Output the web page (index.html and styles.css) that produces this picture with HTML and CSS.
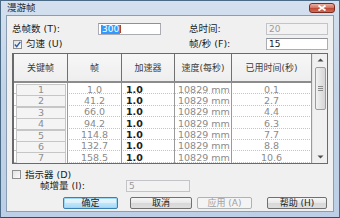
FILE: index.html
```html
<!DOCTYPE html>
<html>
<head>
<meta charset="utf-8">
<link rel="stylesheet" href="styles.css">
</head>
<body>
<div class="window">
  <div class="titlebar">
    <span class="title">漫游帧</span>
    <span class="close"><svg width="10" height="6" viewBox="0 0 10 6"><path d="M1.5 0.5 L8.5 5.5 M8.5 0.5 L1.5 5.5" stroke="#fff" stroke-width="1.8"/></svg></span>
  </div>
  <div class="client">
    <div class="form">
      <span class="lbl">总帧数 (T):</span>
      <div class="input"><span class="sel">300</span><span class="caret"></span></div>
      <span></span>
      <span class="lbl">总时间:</span>
      <div class="input disabled">20</div>
      <span class="chk-row span3"><span class="check"><svg width="7" height="7" viewBox="0 0 7 7"><path d="M0.8 3.6 L2.7 5.6 L6.3 0.8" stroke="#2a5caa" stroke-width="1.4" fill="none"/></svg></span>匀速 (U)</span>
      <span class="lbl">帧/秒 (F):</span>
      <div class="input">15</div>
    </div>

    <div class="table">
      <div class="cols">
        <div class="thead">
          <div>关键帧</div><div>帧</div><div>加速器</div><div>速度(每秒)</div><div>已用时间(秒)</div>
        </div>
        <div class="tbody">
          <div class="tr"><div class="c1"><span>1</span></div><div class="c2">1.0</div><div class="c3">1.0</div><div class="c4">10829 mm</div><div class="c5">0.1</div></div>
          <div class="tr"><div class="c1"><span>2</span></div><div class="c2">41.2</div><div class="c3">1.0</div><div class="c4">10829 mm</div><div class="c5">2.7</div></div>
          <div class="tr"><div class="c1"><span>3</span></div><div class="c2">66.0</div><div class="c3">1.0</div><div class="c4">10829 mm</div><div class="c5">4.4</div></div>
          <div class="tr"><div class="c1"><span>4</span></div><div class="c2">94.2</div><div class="c3">1.0</div><div class="c4">10829 mm</div><div class="c5">6.3</div></div>
          <div class="tr"><div class="c1"><span>5</span></div><div class="c2">114.8</div><div class="c3">1.0</div><div class="c4">10829 mm</div><div class="c5">7.7</div></div>
          <div class="tr"><div class="c1"><span>6</span></div><div class="c2">132.7</div><div class="c3">1.0</div><div class="c4">10829 mm</div><div class="c5">8.8</div></div>
          <div class="tr"><div class="c1"><span>7</span></div><div class="c2">158.5</div><div class="c3">1.0</div><div class="c4">10829 mm</div><div class="c5">10.6</div></div>
          <div class="tr"><div class="c1"><span></span></div><div class="c2"></div><div class="c3"></div><div class="c4"></div><div class="c5"></div></div>
        </div>
      </div>
      <div class="vscroll">
        <div class="arrow"><svg width="7" height="4" viewBox="0 0 7 4"><path d="M0.5 3.5 L3.5 0.5 L6.5 3.5 Z" fill="#4d4d4d"/></svg></div>
        <div class="thumb"><span class="grip"></span></div>
        <div class="track"></div>
        <div class="arrow"><svg width="7" height="4" viewBox="0 0 7 4"><path d="M0.5 0.5 L3.5 3.5 L6.5 0.5 Z" fill="#4d4d4d"/></svg></div>
      </div>
    </div>

    <div class="chk-row ind"><span class="check"></span>指示器 (D)</div>
    <div class="inc-row">
      <span class="lbl inc-lbl">帧增量 (I):</span>
      <div class="input disabled inc-input">5</div>
    </div>

    <div class="buttons">
      <span class="btn default b-ok">确定</span>
      <span class="btn b-cancel">取消</span>
      <span class="btn disabled b-apply">应用 (A)</span>
      <span class="btn b-help">帮助 (H)</span>
    </div>
  </div>
</div>
</body>
</html>
```

FILE: styles.css
```css
* { box-sizing: border-box; }
html, body { margin: 0; padding: 0; }
body {
  width: 340px;
  height: 218px;
  overflow: hidden;
  font-family: "DejaVu Sans", "Noto Sans CJK SC", sans-serif;
  font-size: 9.5px;
  color: #1a1a1a;
}
.window {
  width: 340px;
  height: 218px;
  border: 1px solid #4b6a86;
  border-bottom-color: #2f4f5f;
  background: linear-gradient(#d4e0ee, #c3d4e8 40%, #bccfe6);
  display: flex;
  flex-direction: column;
}
.titlebar {
  height: 14px;
  display: flex;
  justify-content: space-between;
  align-items: flex-start;
  padding: 0 4px 0 6px;
}
.title {
  margin-top: 1px;
  font-size: 9.5px;
  line-height: 12px;
  color: #1e2a3a;
}
.close {
  margin-top: 2px;
  width: 26px;
  height: 10px;
  border: 1px solid #7a2b22;
  border-radius: 3px;
  background: linear-gradient(#eab0a2, #d27865 45%, #c04a35 55%, #cf6d55);
  display: flex;
  align-items: center;
  justify-content: center;
}
.close svg { display: block; }
.client {
  flex: 1;
  margin: 0 5px 5px 5px;
  background: #f0f0f0;
  border: 1px solid #8a9db2;
  padding: 7px 5px 0 5px;
  display: flex;
  flex-direction: column;
}
.form {
  display: grid;
  grid-template-columns: 86px 63px 28px 77px 62px;
  grid-auto-rows: 12px;
  row-gap: 3px;
  align-items: center;
}
.span3 { grid-column: span 3; }
.lbl { white-space: nowrap; line-height: 12px; }
.input {
  height: 12px;
  border: 1px solid #abadb3;
  border-top-color: #8e9198;
  background: #fff;
  padding: 0 2px;
  font-size: 9px;
  line-height: 10px;
  display: flex;
  align-items: center;
  white-space: nowrap;
}
.input.disabled {
  background: #f2f2f2;
  border-color: #c2c4c8;
  color: #9a9a9a;
}
.sel {
  background: #3399ff;
  color: #fff;
  padding: 0 1px;
  line-height: 9px;
}
.caret {
  width: 1px;
  height: 8px;
  background: #b04020;
}
.chk-row {
  display: flex;
  align-items: center;
  gap: 4px;
  padding-left: 1px;
  white-space: nowrap;
  line-height: 10px;
}
.check {
  width: 9px;
  height: 9px;
  border: 1px solid #8e8f8f;
  background: linear-gradient(135deg, #e2e2e2, #fafafa);
  display: flex;
  align-items: center;
  justify-content: center;
}
.check svg { display: block; }

.table {
  margin-top: 3px;
  height: 111px;
  border: 1px solid #6a6a6a;
  border-left-width: 2px;
  display: flex;
  background: #fff;
}
.cols {
  width: 298px;
  flex: none;
  overflow: hidden;
  display: flex;
  flex-direction: column;
}
.thead, .tr {
  display: grid;
  grid-template-columns: 54px 54px 53px 57px 80px;
}
.thead {
  height: 29px;
  flex: none;
  background: linear-gradient(#f7f7f7, #eeeeee);
  border-bottom: 2px solid #8c8c8c;
}
.thead > div {
  border-right: 1px solid #707070;
  display: flex;
  align-items: center;
  justify-content: center;
  font-size: 9px;
  color: #3c3c3c;
  white-space: nowrap;
}
.thead > div:last-child { border-right: 1px solid #8a8a8a; }
.tbody { flex: 1; overflow: hidden; }
.tr {
  height: 11.4px;
  border-bottom: 1px dotted #c4c4c4;
  font-size: 9.5px;
  line-height: 10px;
  color: #8a8a8a;
}
.tr > div {
  border-right: 1px solid #c0c0c0;
  display: flex;
  align-items: center;
  white-space: nowrap;
}
.tr .c1 { padding: 1px 1px 0 2px; border-right-color: #9a9a9a; }
.tr .c1 span {
  flex: 1;
  height: 100%;
  border: 1px solid #c6c6c6;
  background: #f4f4f4;
  display: flex;
  align-items: center;
  justify-content: center;
  color: #8d8d8d;
}
.tr .c2 { justify-content: center; border-right-color: #9a9a9a; }
.tr .c3 { padding-left: 4px; color: #202020; font-weight: bold; border-right-color: #9a9a9a; }
.tr .c4 { padding-left: 3px; border-right-color: #9a9a9a; }
.tr .c5 { justify-content: center; border-right-color: #9a9a9a; }

.vscroll {
  flex: 1;
  background: #f0f0f0;
  border-left: 1px solid #e4e4e4;
  display: flex;
  flex-direction: column;
  align-items: center;
  padding: 2px 1px;
}
.arrow {
  height: 8px;
  width: 100%;
  display: flex;
  align-items: center;
  justify-content: center;
}
.arrow svg { display: block; }
.thumb {
  margin-top: 3px;
  height: 43px;
  width: 11px;
  border: 1px solid #9c9c9c;
  border-radius: 2px;
  background: linear-gradient(90deg, #f2f2f2, #e3e3e3 50%, #d6d6d6);
  display: flex;
  align-items: center;
  justify-content: center;
}
.grip {
  width: 5px;
  height: 5px;
  background: repeating-linear-gradient(#8a8a8a 0 1px, transparent 1px 2px);
}
.track { flex: 1; }

.ind { margin-top: 6px; height: 9px; padding-left: 0; }
.inc-row {
  margin-top: 1px;
  height: 12px;
  display: flex;
  align-items: center;
  padding-left: 28px;
}
.inc-lbl { width: 86px; }
.inc-input { width: 64px; }

.buttons {
  margin-top: 5px;
  display: flex;
  height: 12px;
}
.btn {
  height: 12px;
  border: 1px solid #707070;
  border-radius: 2px;
  background: linear-gradient(#f6f6f6, #e8e8e8 50%, #d8d8d8 51%, #dedede);
  display: flex;
  align-items: center;
  justify-content: center;
  font-size: 9px;
  line-height: 10px;
  color: #1a1a1a;
  white-space: nowrap;
}
.btn.default {
  border-color: #3c7fb1;
  background: linear-gradient(#eaf6fd, #d9f0fc 50%, #bee6fd 51%, #a7d9f5);
  box-shadow: inset 0 0 0 1px #9ed7f5;
}
.btn.disabled {
  border-color: #adb2b5;
  background: #f4f4f4;
  color: #a0a0a0;
}
.b-ok { margin-left: 51px; width: 55px; }
.b-cancel { margin-left: 12px; width: 62px; }
.b-apply { margin-left: 5px; width: 55px; }
.b-help { margin-left: 15px; width: 60px; }
```
